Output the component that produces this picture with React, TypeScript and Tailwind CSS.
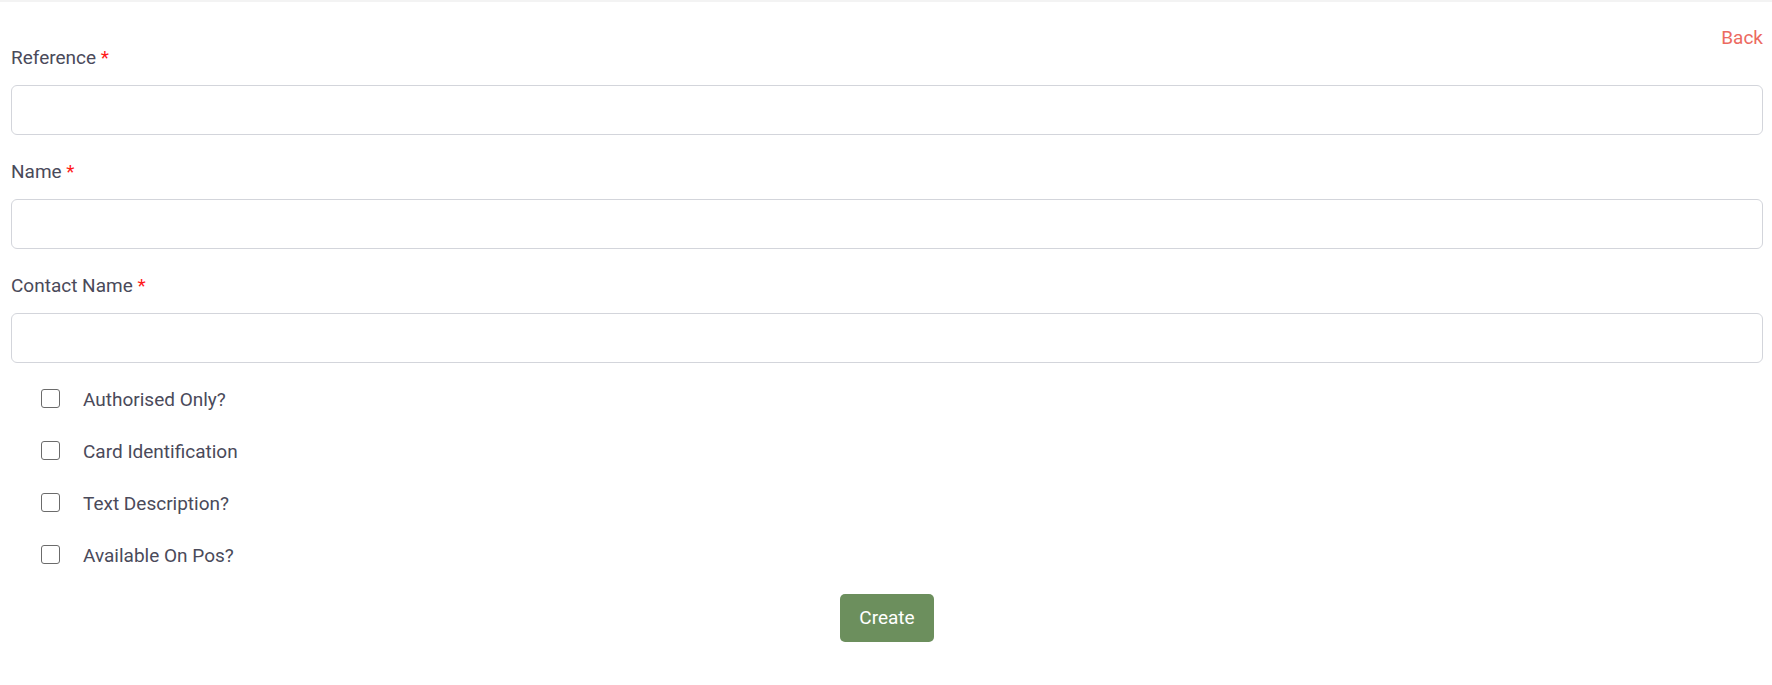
const fields = ['Reference', 'Name', 'Contact Name']

const options = [
  'Authorised Only?',
  'Card Identification',
  'Text Description?',
  'Available On Pos?',
]

export default function App() {
  return (
    <div
      className="bg-white border-t-2 border-[#f3f3f3] text-[19px] text-[#4a4a5a]"
      style={{ fontFamily: 'Roboto, "Liberation Sans", sans-serif' }}
    >
      <div className="pl-[11px] pr-[9px] pb-[30px]">
        {/* Back link */}
        <div className="flex justify-end pt-[25px] h-[45px]">
          <a className="leading-[22px] text-[#ec6a60] cursor-pointer">Back</a>
        </div>

        {/* Text fields */}
        <div className="flex flex-col gap-[26px]">
          {fields.map((label) => (
            <div key={label} className="flex flex-col gap-[16px]">
              <label className="leading-[22px]">
                {label} <span className="text-[#ff1a1a]">*</span>
              </label>
              <input
                type="text"
                className="h-[50px] w-full rounded-[6px] border border-[#d3d5db] px-3 outline-none"
              />
            </div>
          ))}
        </div>

        {/* Checkboxes */}
        <div className="flex flex-col gap-[30px] pt-[26px] pl-[30px]">
          {options.map((opt) => (
            <div key={opt} className="flex items-start gap-[23px]">
              <span className="block h-[19px] w-[19px] rounded-[3px] border border-[#6b6b6b] bg-white" />
              <span className="leading-[22px]">{opt}</span>
            </div>
          ))}
        </div>

        {/* Submit */}
        <div className="flex justify-center pt-[27px]">
          <button className="h-[48px] w-[94px] rounded-[5px] bg-[#6c8f5d] text-white leading-[22px]">
            Create
          </button>
        </div>
      </div>
    </div>
  )
}
